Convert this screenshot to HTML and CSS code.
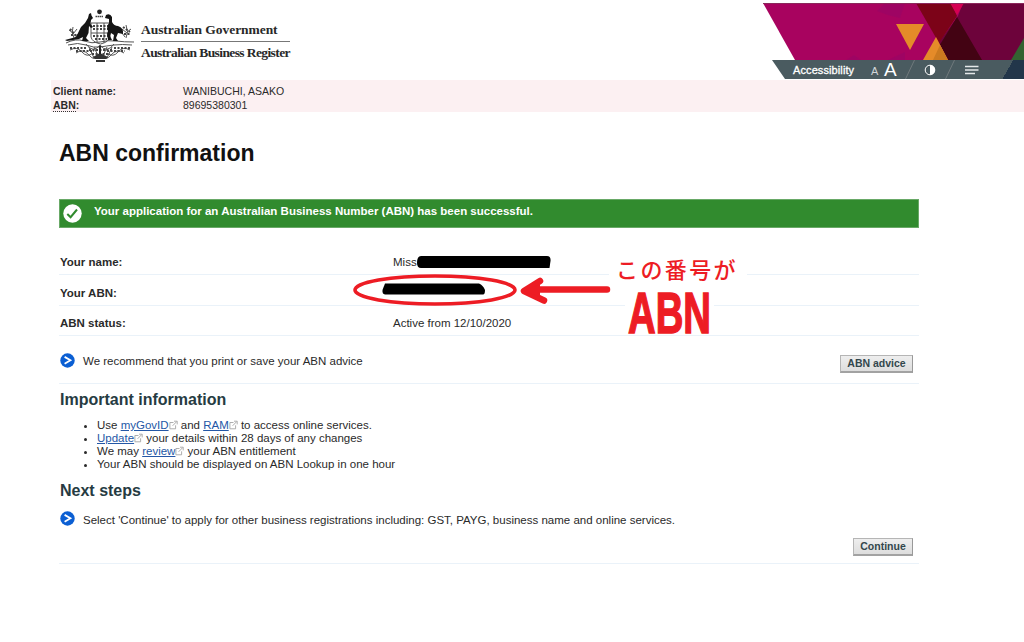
FILE: index.html
```
<!DOCTYPE html>
<html lang="en">
<head>
    <meta charset="UTF-8">
    <meta name="viewport" content="width=device-width, initial-scale=1.0">
    <title>ABN confirmation</title>
    <link rel="stylesheet" href="styles.css">
</head>
<body>
    <!-- Shared icons -->
    <svg class="icon-defs" width="0" height="0">
        <symbol id="icon-arrow" viewBox="0 0 15 15">
            <circle cx="7.5" cy="7.5" r="7.2" fill="#0b5fd3"/>
            <path d="M4.6 3.9 L10.4 7.3 L4.6 10.7" fill="none" stroke="#fff" stroke-width="1.8"/>
        </symbol>
        <symbol id="icon-external" viewBox="0 0 9 10">
            <path d="M4.5 2.5 H.9 V8.8 H6.6 V5.3 M3.6 5.8 L7.6 1.7 M5 1.2 H8.2 V4.4" fill="none" stroke="#a5a5a5" stroke-width=".9"/>
        </symbol>
    </svg>

    <header class="header">
        <div class="brand">
            <!-- Coat of arms -->
            <svg class="crest" viewBox="0 0 72 54" width="72" height="54">
                <g fill="none" stroke="#555" stroke-width="1">
                    <path d="M2 34 Q12 29 20 32 T36 33 T52 32 T70 33"/>
                    <path d="M4 36 Q14 33 22 36 T36 38 T50 36 T68 36"/>
                    <path d="M6 41 Q13 37 18 43 T29 44 M12 44 Q19 39 25 46 T33 46"/>
                    <path d="M66 41 Q59 37 54 43 T43 44 M60 44 Q53 39 47 46 T39 46"/>
                    <path d="M22 35 Q29 45 36 36 Q43 45 50 35"/>
                    <path d="M10 29 Q7 23 9 18 M9 24 L5 21 M9 25 L13 20 M11 29 L15 24"/>
                    <path d="M62 29 Q65 23 62 16 M63 23 L67 20 M63 24 L58 20 M61 28 L58 24"/>
                    <path d="M27 14 H46 V28 Q45 33 36.5 35 Q28 33 27 28 Z M33 14 V34 M40 14 V34 M27 24 H46"/>
                    <path d="M25 38 L30 49 M48 38 L43 49 M30 38 L35 49 M43 38 L38 49"/>
                </g>
                <g stroke="#444" stroke-width="2" stroke-dasharray="2 1.5" fill="none">
                    <path d="M29 17 H45 M29 20 H45 M29 27 H44 M31 30 H43"/>
                    <path d="M6 39 H22 M50 39 H67 M12 42 H30 M43 42 H61"/>
                    <path d="M6 20 L12 27 M59 18 L66 23 M7 26 H13 M60 25 H66"/>
                    <path d="M28 45 H46 M25 41 H48"/>
                </g>
                <circle cx="35.5" cy="2.8" r="2.4" fill="#222"/>
                <path d="M31.5 7.5 H39.5" stroke="#444" stroke-width="1.4" stroke-dasharray="1.5 .5"/>
                <path d="M25 5 L27 4 L27.5 6.5 L29 9 L27 11 L26.5 15 L29 18 L27 19 L25 17 L24.5 24 L22 29 L25 32 H18 L19 28 L15 30 L3 32 L1 31 L12 28 L15 22 Q17 17 21 14 L24 9 Z" fill="#151515"/>
                <path d="M42 6 Q46 4 48 8 L48 13 Q50 17 54 17 Q60 19 59 25 L54 24 L52 29 L54 32 H49 L50 26 L47 24 L46 27 L48 31 H44 L43 25 L44 22 Q42 18 45 14 L45 10 L41 9 Z" fill="#151515"/>
                <path d="M29 48 L36 44 L44 48 L42 50 H31 Z M32 51 H41 V53 H32 Z" fill="#333"/>
                <path d="M36 37 V45" stroke="#222" stroke-width="2"/>
            </svg>
            <div class="brand-names">
                <div class="brand-gov">Australian Government</div>
                <div class="brand-abr">Australian Business Register</div>
            </div>
        </div>
        <div class="banner">
            <svg class="banner-art" viewBox="0 0 261 57" width="261" height="57">
                <polygon points="0,0 261,0 261,57 32,57" fill="#a8035f"/>
                <path d="M114 8 L122 0 H142 L137 15 L125 12 Z M83 57 L91 52 L98 57 Z M125 57 L142 49 V57 Z" fill="#8b086c" opacity=".35"/>
                <polygon points="200,0 261,0 261,57 163,57 195,13" fill="#6d033b"/>
                <polygon points="194,14 219,57 163,57 178,40" fill="#430313"/>
                <polygon points="153,0 188,0 194,13 176,40" fill="#7c0318"/>
                <polygon points="187,0 201,0 194,12" fill="#d50052"/>
                <polygon points="133,21 161,21 147,47" fill="#e58b29"/>
                <polygon points="163,57 176,40 185,57" fill="#a8035f"/>
                <polygon points="173,34 185,57 160,57" fill="#e58b29"/>
                <polygon points="177,42 185,57 170,57" fill="#cb7a20"/>
                <polygon points="261,35 261,57 248,57" fill="#336331"/>
                <path d="M0 .5 H261" stroke="#8b275b" stroke-width="1"/>
            </svg>
            <div class="tools">
                <span class="tools-label">Accessibility</span>
                <span class="font-small">A</span>
                <span class="font-large">A</span>
                <svg class="slash" viewBox="0 0 10 19" width="10" height="19"><path d="M9.5 0 L.5 19" stroke="#70797c"/></svg>
                <svg class="contrast" viewBox="0 0 12 12" width="12" height="12">
                    <circle cx="6" cy="6" r="4.8" fill="none" stroke="#fff" stroke-width="1"/>
                    <path d="M6 1 A5 5 0 0 1 6 11 Z" fill="#fff"/>
                </svg>
                <svg class="slash" viewBox="0 0 10 19" width="10" height="19"><path d="M9.5 0 L.5 19" stroke="#70797c"/></svg>
                <svg class="menu" viewBox="0 0 14 10" width="14" height="10"><path d="M0 1.5 H13.5 M0 5 H13.5 M0 8.5 H10" stroke="#e4e8e9" stroke-width="1.7"/></svg>
            </div>
        </div>
    </header>

    <section class="client">
        <div class="client-row"><b class="client-label">Client name:</b><span>WANIBUCHI, ASAKO</span></div>
        <div class="client-row"><b class="client-label"><span class="dotted">ABN</span>:</b><span>89695380301</span></div>
    </section>

    <main class="content">
        <h1>ABN confirmation</h1>

        <div class="success">
            <svg viewBox="0 0 19 19" width="19" height="19">
                <circle cx="9.5" cy="9.5" r="9.2" fill="#fff"/>
                <path d="M4.3 10 L7.6 13.2 L14 5.5" fill="none" stroke="#318b2e" stroke-width="2"/>
            </svg>
            <span>Your application for an Australian Business Number (ABN) has been successful.</span>
        </div>

        <div class="details">
            <div class="detail"><b>Your name:</b><span>Miss</span></div>
            <div class="detail detail-abn"><b>Your ABN:</b></div>
            <div class="detail detail-status"><b>ABN status:</b><span>Active from 12/10/2020</span></div>
        </div>

        <div class="advice">
            <svg class="arrow-icon"><use href="#icon-arrow"/></svg>
            <span>We recommend that you print or save your ABN advice</span>
            <button class="btn-advice">ABN advice</button>
        </div>

        <h2>Important information</h2>
        <ul>
            <li>Use <a href="#">myGovID</a><svg class="external"><use href="#icon-external"/></svg> and <a href="#">RAM</a><svg class="external"><use href="#icon-external"/></svg> to access online services.</li>
            <li><a href="#">Update</a><svg class="external"><use href="#icon-external"/></svg> your details within 28 days of any changes</li>
            <li>We may <a href="#">review</a><svg class="external"><use href="#icon-external"/></svg> your ABN entitlement</li>
            <li>Your ABN should be displayed on ABN Lookup in one hour</li>
        </ul>

        <h2 class="next-title">Next steps</h2>
        <div class="next">
            <svg class="arrow-icon"><use href="#icon-arrow"/></svg>
            <span>Select 'Continue' to apply for other business registrations including: GST, PAYG, business name and online services.</span>
        </div>
        <div class="actions"><button class="btn-continue">Continue</button></div>
    </main>

    <!-- Hand-drawn notes over the page -->
    <svg class="notes" viewBox="0 0 410 110" width="410" height="110">
        <rect x="269" y="18" width="138" height="26" fill="#fff"/>
        <rect x="285" y="44" width="89" height="49" fill="#fff"/>
        <path d="M81 15 L207 15 Q211 15 210.5 20 L209.5 27 L81 27 Q77 27 77 22 Q77 15 81 15 Z" fill="#000"/>
        <path d="M45 42.5 L139 42.5 Q143 44 145 49 Q145 53.5 143 53.5 H45 Q42 53 42.5 49 Z" fill="#000"/>
        <ellipse cx="95" cy="49" rx="80" ry="14" fill="none" stroke="#ed1c24" stroke-width="3.6"/>
        <path d="M267 48.5 H190 M200 40 L184 50 L204 59.5" fill="none" stroke="#ed1c24" stroke-width="6.5" stroke-linecap="round" stroke-linejoin="round"/>
        <path d="M184 50 L200 43 V56 Z" fill="#ed1c24"/>
        <text class="note-ja" x="276" y="37">この番号が</text>
        <text class="note-abn" x="288" y="92" textLength="83" lengthAdjust="spacingAndGlyphs">ABN</text>
    </svg>
</body>
</html>
```

FILE: styles.css
```
* {
    box-sizing: border-box;
    margin: 0;
    padding: 0;
}

body {
    position: relative;
    height: 642px;
    overflow: hidden;
    background-color: #fff;
    color: #2a2a2a;
    font-family: "Liberation Sans", Arial, sans-serif;
    font-size: 11.5px;
    white-space: nowrap;
}

.icon-defs {
    position: absolute;
}

/* Header */
.header {
    display: flex;
    justify-content: space-between;
    height: 80px;
}

.brand {
    display: flex;
    padding: 9px 0 0 64px;
    gap: 5px;
}

.brand-names {
    padding-top: 12px;
    width: 149px;
    color: #292929;
    font-family: "Liberation Serif", "Times New Roman", serif;
    font-size: 13.5px;
    font-weight: bold;
    line-height: 18px;
}

.brand-gov {
    height: 21px;
    border-bottom: 1px solid #777;
    letter-spacing: -0.05px;
}

.brand-abr {
    padding-top: 2px;
    letter-spacing: -0.6px;
}

.banner {
    width: 261px;
    padding-top: 3px;
}

.banner-art {
    display: block;
}

.tools {
    display: flex;
    align-items: center;
    width: 252px;
    height: 19px;
    margin-left: 9px;
    padding-left: 21px;
    color: #fff;
    background: linear-gradient(120deg, #4a5b60 0 209px, #22364a 209px);
    clip-path: polygon(0 0, 100% 0, 100% 100%, 13px 100%);
}

.tools-label {
    width: 78px;
    font-size: 11px;
    -webkit-text-stroke: 0.3px #fff;
    letter-spacing: 0.1px;
}

.font-small {
    width: 13px;
    padding-top: 3px;
    color: #d0d6d8;
    font-size: 11px;
}

.font-large {
    width: 21px;
    font-size: 19px;
}

.contrast {
    margin: 0 9px;
}

.menu {
    margin-left: 10px;
}

/* Client strip */
.client {
    height: 32px;
    margin-left: 51px;
    padding: 4px 0 0 2px;
    background-color: #fcf0f2;
    font-size: 10.5px;
    line-height: 14px;
}

.client-row {
    display: flex;
}

.client-label {
    width: 130px;
}

.dotted {
    border-bottom: 1px dotted #333;
}

/* Page content */
.content {
    width: 860px;
    margin-left: 59px;
}

h1 {
    height: 87px;
    padding-top: 26px;
    color: #111;
    font-size: 23px;
    line-height: 30px;
}

.success {
    display: flex;
    height: 29px;
    padding: 4px;
    gap: 12px;
    border: 1px solid #69a967;
    background-color: #318b2e;
    color: #fff;
    font-weight: bold;
    line-height: 14px;
}

.success svg {
    margin-left: -1px;
}

.details {
    padding-top: 18px;
}

.detail {
    display: flex;
    height: 29px;
    padding-top: 9px;
    border-bottom: 1px solid #eaf2f9;
    line-height: 14px;
}

.detail b {
    width: 334px;
    padding-left: 1px;
}

.detail-abn {
    height: 31px;
    padding-top: 11px;
}

.detail-status {
    height: 30px;
    padding-top: 10px;
}

.arrow-icon {
    width: 15px;
    height: 15px;
}

.advice {
    display: flex;
    height: 48px;
    padding: 16px 6px 0 1px;
    gap: 8px;
    border-bottom: 1px solid #eaf2f9;
    line-height: 18px;
}

.advice .arrow-icon {
    margin-top: 1px;
}

button {
    height: 18px;
    margin-left: auto;
    border: 1px solid #b5b5b5;
    border-right-color: #999;
    border-bottom: 2px solid #a2a2a2;
    background: linear-gradient(#eee, #ddd);
    color: #33474d;
    font-family: inherit;
    font-size: 10.5px;
    font-weight: bold;
    line-height: 15px;
}

.btn-advice {
    width: 73px;
    margin-top: 3px;
}

h2 {
    padding: 6px 0 0 1px;
    color: #263b42;
    font-size: 16px;
    line-height: 20px;
}

ul {
    padding: 9px 0 0 38px;
    line-height: 13px;
}

a {
    color: #2457a6;
}

.external {
    width: 9px;
    height: 10px;
    vertical-align: -1px;
}

.next-title {
    padding-top: 10px;
}

.next {
    display: flex;
    padding: 10px 0 0 1px;
    gap: 8px;
    line-height: 18px;
}

.actions {
    display: flex;
    height: 35px;
    padding: 9px 6px 0 0;
    border-bottom: 1px solid #eaf2f9;
}

.btn-continue {
    width: 60px;
}

/* Annotations */
.notes {
    position: absolute;
    top: 241px;
    left: 340px;
}

.note-ja {
    fill: #ed1c24;
    font-family: "Noto Sans CJK JP", sans-serif;
    font-size: 22px;
    font-weight: 500;
    letter-spacing: 2.4px;
}

.note-abn {
    fill: #ed1c24;
    stroke: #ed1c24;
    stroke-width: 1.5px;
    font-family: "Liberation Sans", Arial, sans-serif;
    font-size: 57px;
    font-weight: bold;
}
```
